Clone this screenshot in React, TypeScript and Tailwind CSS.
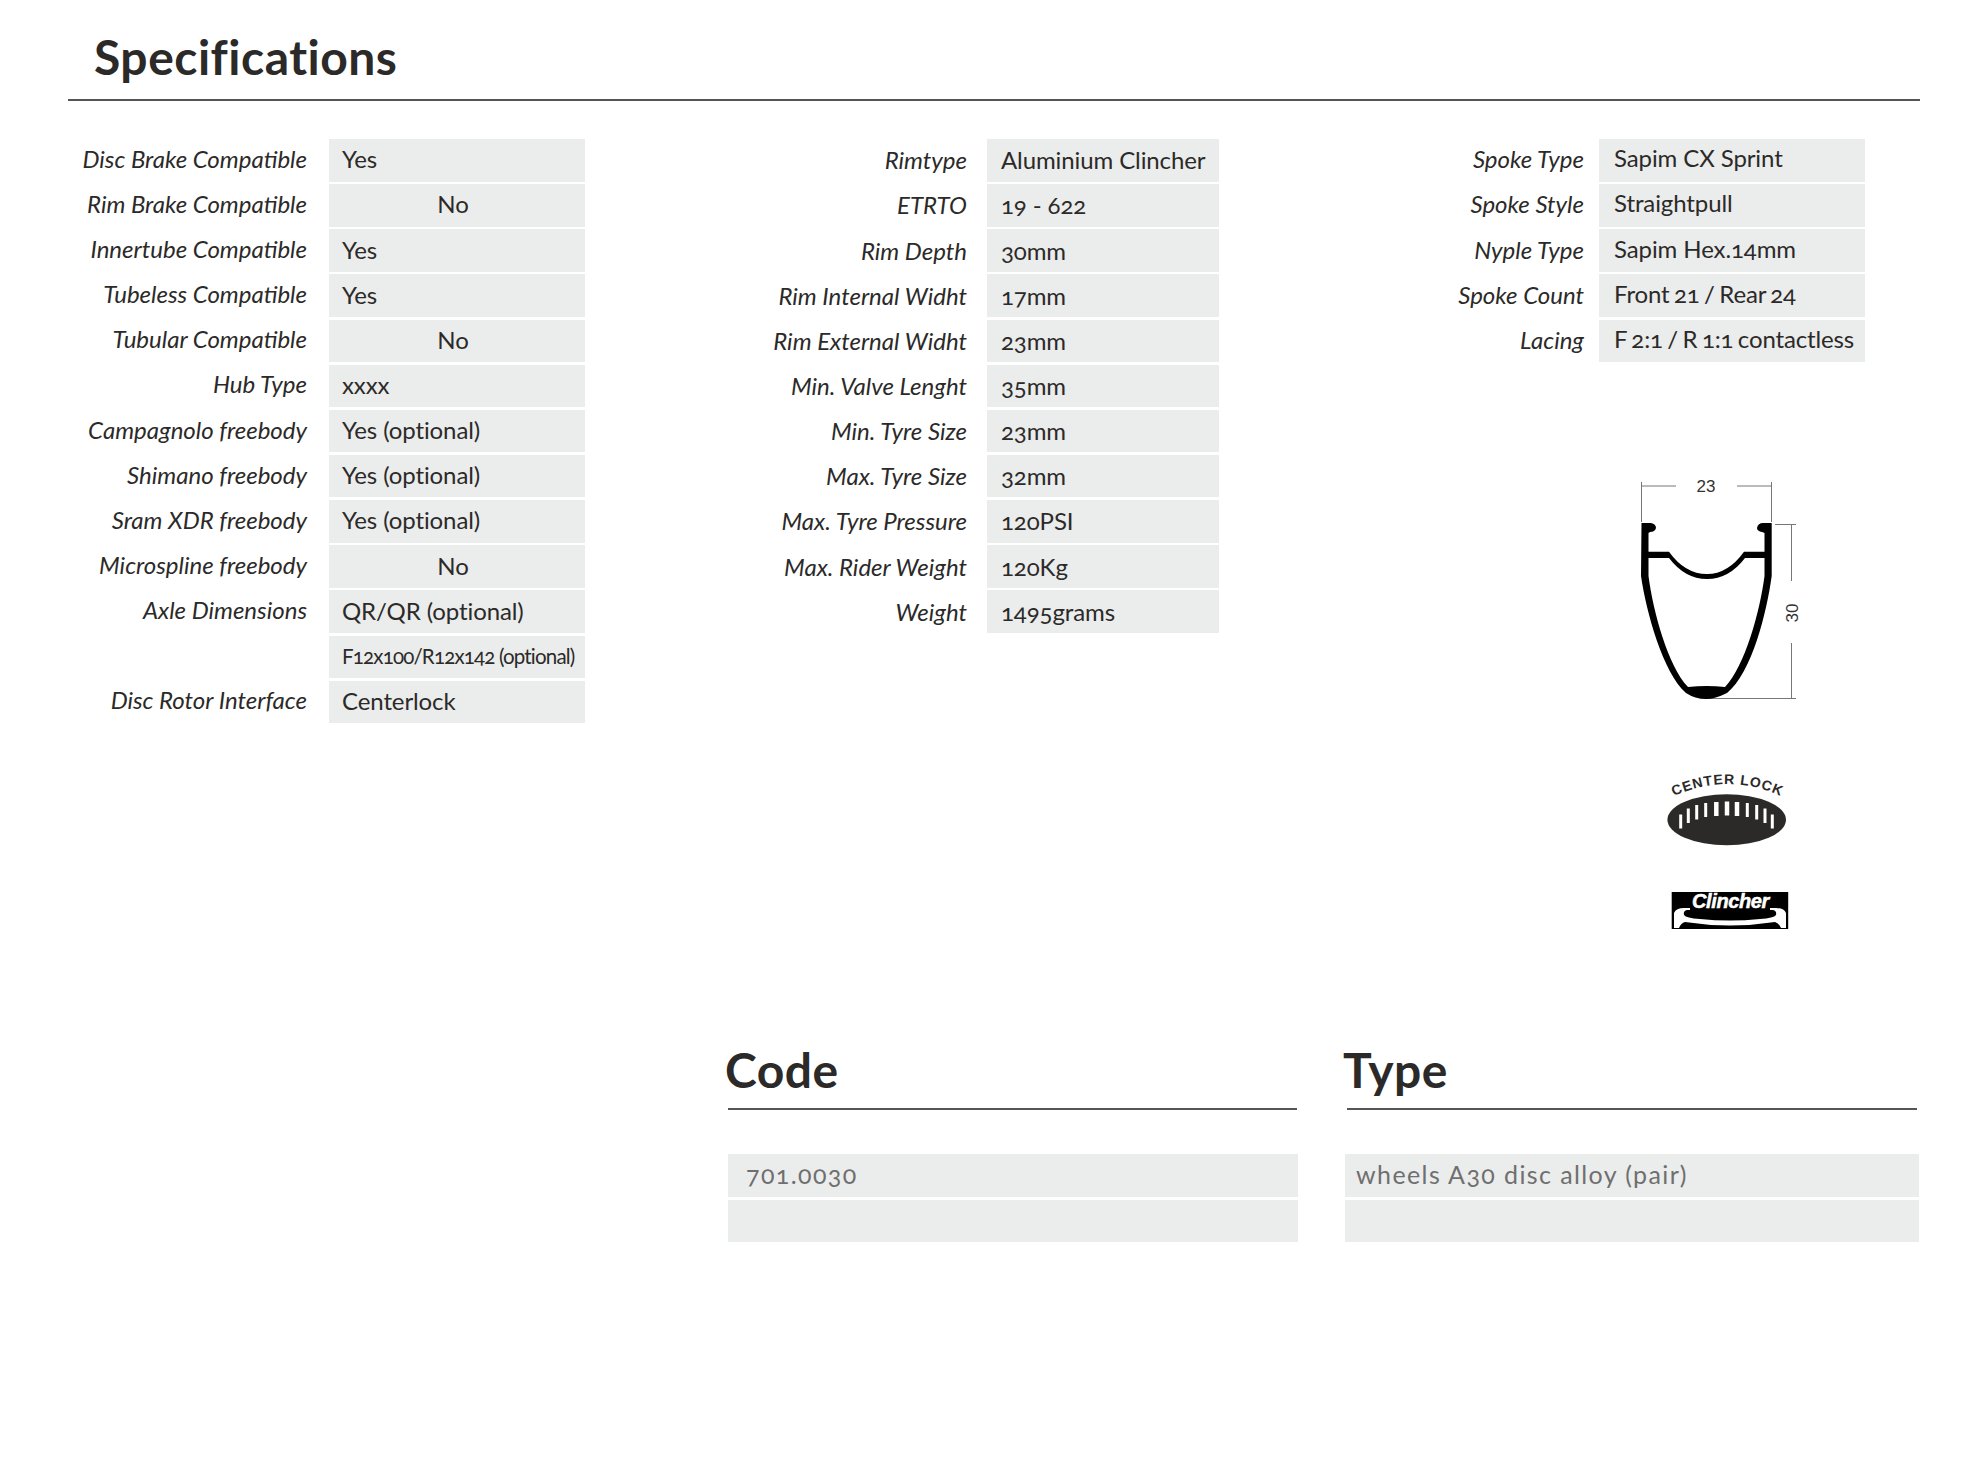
import React from 'react';

const left: [string, string, boolean?][] = [
  ['Disc Brake Compatible', 'Yes'],
  ['Rim Brake Compatible', 'No', true],
  ['Innertube Compatible', 'Yes'],
  ['Tubeless Compatible', 'Yes'],
  ['Tubular Compatible', 'No', true],
  ['Hub Type', 'xxxx'],
  ['Campagnolo freebody', 'Yes (optional)'],
  ['Shimano freebody', 'Yes (optional)'],
  ['Sram XDR freebody', 'Yes (optional)'],
  ['Microspline freebody', 'No', true],
  ['Axle Dimensions', 'QR/QR (optional)'],
  ['', 'F12x100/R12x142 (optional)'],
  ['Disc Rotor Interface', 'Centerlock'],
];

const middle: [string, string][] = [
  ['Rimtype', 'Aluminium Clincher'],
  ['ETRTO', '19 - 622'],
  ['Rim Depth', '30mm'],
  ['Rim Internal Widht', '17mm'],
  ['Rim External Widht', '23mm'],
  ['Min. Valve Lenght', '35mm'],
  ['Min. Tyre Size', '23mm'],
  ['Max. Tyre Size', '32mm'],
  ['Max. Tyre Pressure', '120PSI'],
  ['Max. Rider Weight', '120Kg'],
  ['Weight', '1495grams'],
];

const right: [string, string][] = [
  ['Spoke Type', 'Sapim CX Sprint'],
  ['Spoke Style', 'Straightpull'],
  ['Nyple Type', 'Sapim Hex.14mm'],
  ['Spoke Count', 'Front 21 / Rear 24'],
  ['Lacing', 'F 2:1 / R 1:1 contactless'],
];

const valueStyle = (value: string) => {
  if (value.startsWith('F12')) return 'text-[20.5px] tracking-[-0.82px]';
  if (value.includes(' / ')) return 'text-[24px] tracking-[-0.15px] [word-spacing:-1.5px]';
  return 'text-[24px] tracking-[-0.1px]';
};

const SpecTable: React.FC<{
  rows: [string, string, boolean?][];
  labelClass: string;
  cellClass: string;
}> = ({ rows, labelClass, cellClass }) => (
  <div className="flex flex-col gap-[2.65px]">
    {rows.map(([label, value, center], i) => (
      <div key={i} className="flex h-[42.5px] items-center">
        <div className={`${labelClass} text-right italic text-[24px] leading-none`}>{label}</div>
        <div
          className={`${cellClass} h-full flex items-center bg-[#ebecec] whitespace-nowrap leading-none ${
            center ? 'justify-center pr-[21px]' : ''
          } ${valueStyle(value)}`}
        >
          {value}
        </div>
      </div>
    ))}
  </div>
);

const RimProfile = () => (
  <svg width="240" height="260" viewBox="0 0 240 260" className="block">
    <g stroke="#777" strokeWidth="1" fill="none">
      <path d="M61.5 21V61M191.5 21V61M61.5 25H96M157 25H191.5" />
      <path d="M195 63.5H216M211.5 63.5V120M211.5 182V237.5M126 237.5H216" />
    </g>
    <text x="126" y="31" textAnchor="middle" fontSize="17" fill="#333" fontFamily="Liberation Sans">23</text>
    <text x="0" y="0" textAnchor="middle" fontSize="17" fill="#333" fontFamily="Liberation Sans" transform="translate(218 152) rotate(-90)">30</text>
    <path
      fillRule="evenodd"
      fill="#000"
      d="M61.5 62L71 62Q76 63 76 67Q75 71 70 71L68.5 72L68.5 90.7L89 90.7Q105 113 127 113Q148 113 164 90.7L184.5 90.7L184.5 72L182 71Q177 70 177 67Q178 62 183 62L191.7 62L191.7 115C187 150 172 212 147 232Q135 238 126 238Q115 238 106 232C83 212 66 150 61 115ZM68.5 97L89 97Q105 118 127 118Q149 118 165 97L184.5 97L184.5 115C180 150 165 205 145 226Q127 224 108 226C88 205 73 150 68.5 115Z"
    />
  </svg>
);

const bars = [
  [40.7, 63.5, 77.5],
  [48.3, 57.5, 72],
  [56.7, 54, 68.5],
  [65.7, 52, 66],
  [76.3, 51, 65],
  [87, 50.5, 64.5],
  [97, 51, 65],
  [107.3, 52, 66],
  [116.7, 54, 68.5],
  [125, 57.5, 72],
  [132.3, 63.5, 77.5],
];

const Logos = () => (
  <svg width="180" height="190" viewBox="0 0 180 190" className="block">
    <ellipse cx="86.7" cy="68.8" rx="59.3" ry="25.5" fill="#2b2a29" />
    {bars.map(([x, y1, y2]) => (
      <line key={x} x1={x} x2={x} y1={y1} y2={y2} stroke="#fff" strokeWidth={x > 70 && x < 100 ? 4.5 : 3} />
    ))}
    <path id="lockArc" d="M30 47Q87 19 145 47" fill="none" />
    <text fontSize="14" fontWeight="700" fill="#2b2a29" fontFamily="Liberation Sans" letterSpacing="0.9">
      <textPath href="#lockArc" startOffset="50%" textAnchor="middle">CENTER LOCK</textPath>
    </text>
    <rect x="31.7" y="141" width="116.5" height="37" fill="#000" />
    <path
      fill="#fff"
      d="M34 177L34 162Q36 157 44 157L50 157L50 159L47 159Q43 160 44 164Q46 167 60 168Q90 171 120 168Q134 167 136 164Q137 160 133 159L130 159L130 157L136 157Q144 157 146 162L146 177L141 177Q139 172 135 171Q90 178 45 171Q41 172 39 177Z"
    />
    <text x="90.5" y="157" textAnchor="middle" fontSize="20" fontWeight="700" fontStyle="italic" fill="#fff" stroke="#fff" strokeWidth="0.5" fontFamily="Liberation Sans" letterSpacing="-0.4">Clincher</text>
  </svg>
);

const App: React.FC = () => {
  return (
    <div
      className="w-[1988px] h-[1459px] bg-white px-[68px] text-[#2b2a29] oldstyle-nums"
      style={{ fontFamily: 'Lato, "Open Sans", sans-serif' }}
    >
      <div className="h-[101px] border-b-2 border-[#555] pl-[26px] pt-[28px]">
        <h1 className="text-[48px] font-bold leading-[58px] tracking-[0.5px]">Specifications</h1>
      </div>

      <div className="flex items-start pt-[38px] h-[910px]">
        <SpecTable rows={left} labelClass="w-[239px] mr-[22px] pb-[3px]" cellClass="w-[256px] pl-[13px] pb-[2px]" />
        <div className="ml-[155px]">
          <SpecTable rows={middle} labelClass="w-[227px] mr-[20px]" cellClass="w-[232px] pl-[14px]" />
        </div>
        <div className="ml-[212px]">
          <SpecTable rows={right} labelClass="w-[153px] mr-[15px] pb-[2px]" cellClass="w-[266px] pl-[15px] pb-[4px]" />
          <div className="ml-[149px] mt-[99px]">
            <RimProfile />
          </div>
          <div className="ml-[209px] mt-[30px]">
            <Logos />
          </div>
        </div>
      </div>

      <div className="flex ml-[660px] pt-[30px]">
        <div className="w-[570px]">
          <h2 className="text-[48px] font-bold leading-[58px] h-[67px] tracking-[0.5px] -ml-[3px]">Code</h2>
          <div className="border-t-2 border-[#555] mb-[44px] mr-px" />
          <div className="flex flex-col gap-[3px]">
            <div className="h-[42.5px] bg-[#ebecec] pl-[18px] pb-[2px] flex items-center text-[25px] tracking-[1.4px] text-[#6f6f6f]">701.0030</div>
            <div className="h-[42.5px] bg-[#ebecec]" />
          </div>
        </div>
        <div className="w-[574px] ml-[47px]">
          <h2 className="text-[48px] font-bold leading-[58px] h-[67px] tracking-[0.5px] -ml-[2px]">Type</h2>
          <div className="border-t-2 border-[#555] mb-[44px] ml-[2px] mr-[2px]" />
          <div className="flex flex-col gap-[3px]">
            <div className="h-[42.5px] bg-[#ebecec] pl-[11px] pb-[2px] flex items-center text-[25px] tracking-[1.4px] text-[#6f6f6f]">wheels A30 disc alloy (pair)</div>
            <div className="h-[42.5px] bg-[#ebecec]" />
          </div>
        </div>
      </div>
    </div>
  );
};

export default App;
